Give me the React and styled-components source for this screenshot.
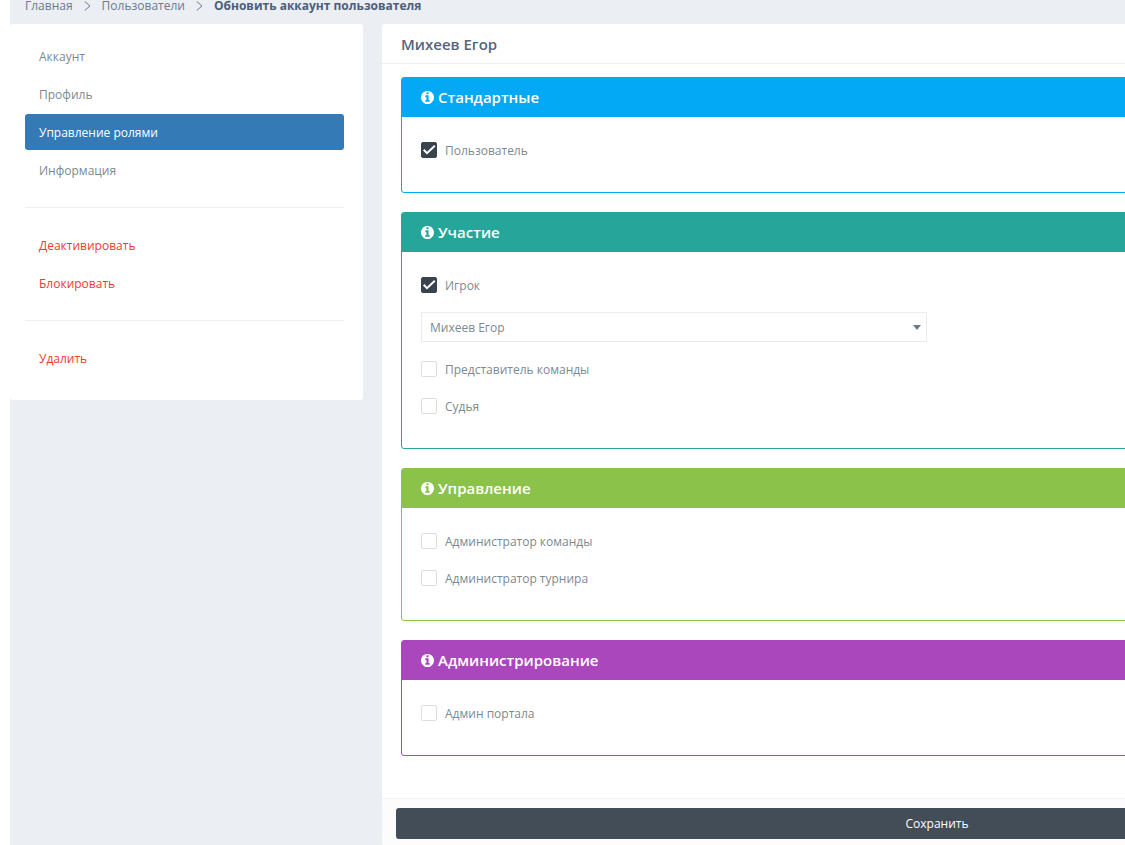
import React, { useState } from 'react'
import styled, { createGlobalStyle, css } from 'styled-components'

const GlobalStyle = createGlobalStyle`
  * {
    box-sizing: border-box;
  }
  body {
    margin: 0;
    background: #fff;
    color: #7b8a91;
    font: 12px/20px 'Open Sans', 'Noto Sans', sans-serif;
  }
`

const Viewport = styled.div`
  min-height: 100vh;
  padding-left: 10px;
  overflow: hidden;
`

// the page is wider than the window, the right part is scrolled out
const Page = styled.div`
  width: 134%;
  min-height: 100vh;
  padding-right: 12px;
  background: #ebeef3;
`

const Breadcrumb = styled.nav`
  display: flex;
  align-items: center;
  gap: 11px;
  height: 24px;
  padding: 0 15px 12px;
  line-height: 12px;
`

const Crumb = styled.a`
  color: #6c7a8d;
  text-decoration: none;
`

const CurrentCrumb = styled.strong`
  color: #4d5e7b;
  font-weight: 700;
`

const Chevron = styled.svg`
  width: 7px;
  height: 10px;
  fill: none;
  stroke: #6c7a8d;
`

const Columns = styled.div`
  display: flex;
  align-items: flex-start;
  gap: 19px;
`

const Card = styled.section`
  background: #fff;
  border-radius: 3px;
`

const Sidebar = styled(Card)`
  flex: 0 0 353px;
  padding: 14px 19px 24px 15px;
`

const Main = styled(Card)`
  flex: 1;
`

const MenuGroup = styled.div`
  display: flex;
  flex-direction: column;
  gap: 2px;
  & + & {
    margin-top: 19px;
    padding-top: 19px;
    border-top: 1px solid #eceef0;
  }
`

const MenuItem = styled.a`
  padding: 9px 14px 7px;
  border-radius: 3px;
  color: ${props => (props.$danger ? '#f23a30' : '#7b8a91')};
  text-decoration: none;
  ${props =>
    props.$active &&
    css`
      background: #337ab7;
      color: #fff;
    `}
`

const CardTitle = styled.h1`
  margin: 0;
  padding: 10px 19px 9px;
  border-bottom: 1px solid #eceef0;
  color: #56657f;
  font-size: 15px;
  font-weight: 600;
  line-height: 20px;
`

const CardBody = styled.div`
  display: flex;
  flex-direction: column;
  gap: 19px;
  padding: 13px 19px 42px;
`

const Panel = styled.section`
  border: 1px solid ${props => props.$color};
  border-radius: 3px;
`

const PanelTitle = styled.h2`
  display: flex;
  align-items: center;
  gap: 4px;
  height: 39px;
  margin: 0;
  padding: 0 19px 2px;
  background: ${props => props.$color};
  color: #fff;
  font-size: 15px;
  font-weight: 600;
`

const InfoSvg = styled.svg`
  width: 13px;
  height: 13px;
  margin-top: 2px;
  fill: currentColor;
`

const PanelBody = styled.div`
  display: flex;
  flex-direction: column;
  align-items: flex-start;
  gap: 17px;
  padding: 23px 19px 32px;
`

const CheckLabel = styled.label`
  display: flex;
  align-items: flex-start;
  gap: 8px;
  height: 20px;
  line-height: 22px;
`

const CheckBox = styled.span`
  display: grid;
  width: 16px;
  height: 16px;
  margin-top: 2px;
  & > * {
    grid-area: 1 / 1;
  }
  & svg {
    width: 16px;
    height: 16px;
    fill: none;
    stroke: #fff;
    stroke-width: 2;
    pointer-events: none;
  }
`

const CheckInput = styled.input`
  appearance: none;
  width: 16px;
  height: 16px;
  margin: 0;
  border: 1px solid #dcdfe2;
  border-radius: 2px;
  background: #fff;
  &:checked {
    border-color: #39434d;
    background: #39434d;
  }
`

const SelectBox = styled.div`
  display: grid;
  align-items: center;
  width: calc(50% - 10px);
  & > * {
    grid-area: 1 / 1;
  }
  & svg {
    justify-self: end;
    width: 8px;
    height: 5px;
    margin-right: 6px;
    fill: #687b8c;
    pointer-events: none;
  }
`

const Select = styled.select`
  appearance: none;
  width: 100%;
  height: 30px;
  padding: 2px 8px 0;
  border: 1px solid #e9ebed;
  border-radius: 0;
  background: #fff;
  color: inherit;
  font: inherit;
`

const CardFooter = styled.div`
  padding: 9px 14px 6px;
  border-top: 1px solid #f4f5f5;
  border-radius: 0 0 3px 3px;
  background: #fcfcfc;
`

const SaveButton = styled.button`
  width: 100%;
  height: 31px;
  border: 0;
  border-radius: 3px;
  background: #434d57;
  color: #fff;
  font: inherit;
`

const Separator = () =>
  <Chevron viewBox="0 0 7 10" aria-hidden="true">
    <path d="M0.7 0.5 6 5 0.7 9.5" />
  </Chevron>

const InfoIcon = () =>
  <InfoSvg viewBox="128 128 1536 1536" aria-hidden="true">
    <path d="M1152 1376v-160q0-14-9-23t-23-9h-96v-512q0-14-9-23t-23-9h-320q-14 0-23 9t-9 23v160q0 14 9 23t23 9h96v320h-96q-14 0-23 9t-9 23v160q0 14 9 23t23 9h448q14 0 23-9t9-23zm-128-896v-160q0-14-9-23t-23-9h-192q-14 0-23 9t-9 23v160q0 14 9 23t23 9h192q14 0 23-9t9-23zm640 416q0 209-103 385.5t-279.5 279.5-385.5 103-385.5-103-279.5-279.5-103-385.5 103-385.5 279.5-279.5 385.5-103 385.5 103 279.5 279.5 103 385.5z" />
  </InfoSvg>

const Role = ({ name, initial = false }) => {
  const [checked, setChecked] = useState(initial)
  return (
    <CheckLabel>
      <CheckBox>
        <CheckInput
          type="checkbox"
          checked={checked}
          onChange={e => setChecked(e.target.checked)}
        />
        {checked &&
          <svg viewBox="0 0 16 16" aria-hidden="true">
            <path d="M2.7 7.8 6 11.2 13.8 3.8" />
          </svg>}
      </CheckBox>
      {name}
    </CheckLabel>
  )
}

const RolePanel = ({ title, color, children }) =>
  <Panel $color={color}>
    <PanelTitle $color={color}>
      <InfoIcon />
      {title}
    </PanelTitle>
    <PanelBody>{children}</PanelBody>
  </Panel>

const App = () =>
  <Viewport>
    <GlobalStyle />
    <Page>
      <Breadcrumb>
        <Crumb href="#home">Главная</Crumb>
        <Separator />
        <Crumb href="#users">Пользователи</Crumb>
        <Separator />
        <CurrentCrumb>Обновить аккаунт пользователя</CurrentCrumb>
      </Breadcrumb>
      <Columns>
        <Sidebar as="aside">
          <MenuGroup>
            <MenuItem href="#account">Аккаунт</MenuItem>
            <MenuItem href="#profile">Профиль</MenuItem>
            <MenuItem href="#roles" $active>Управление ролями</MenuItem>
            <MenuItem href="#info">Информация</MenuItem>
          </MenuGroup>
          <MenuGroup>
            <MenuItem href="#deactivate" $danger>Деактивировать</MenuItem>
            <MenuItem href="#block" $danger>Блокировать</MenuItem>
          </MenuGroup>
          <MenuGroup>
            <MenuItem href="#delete" $danger>Удалить</MenuItem>
          </MenuGroup>
        </Sidebar>
        <Main as="main">
          <CardTitle>Михеев Егор</CardTitle>
          <CardBody>
            <RolePanel title="Стандартные" color="#03a9f4">
              <Role name="Пользователь" initial />
            </RolePanel>
            <RolePanel title="Участие" color="#26a69a">
              <Role name="Игрок" initial />
              <SelectBox>
                <Select aria-label="Игрок">
                  <option>Михеев Егор</option>
                </Select>
                <svg viewBox="0 0 8 5" aria-hidden="true">
                  <path d="M0 0h8L4 5z" />
                </svg>
              </SelectBox>
              <Role name="Представитель команды" />
              <Role name="Судья" />
            </RolePanel>
            <RolePanel title="Управление" color="#8bc34a">
              <Role name="Администратор команды" />
              <Role name="Администратор турнира" />
            </RolePanel>
            <RolePanel title="Администрирование" color="#ab47bc">
              <Role name="Админ портала" />
            </RolePanel>
          </CardBody>
          <CardFooter>
            <SaveButton type="submit">Сохранить</SaveButton>
          </CardFooter>
        </Main>
      </Columns>
    </Page>
  </Viewport>

export default App
